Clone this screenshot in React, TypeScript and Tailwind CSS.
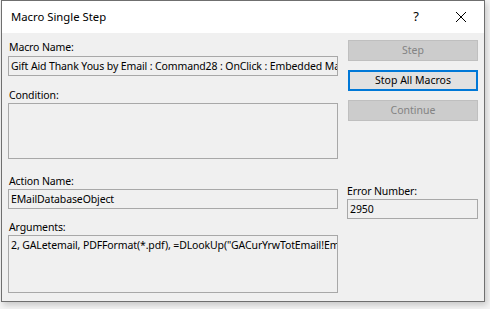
import React from "react";

const font = { fontFamily: '"Noto Sans", "Open Sans", Arial, sans-serif' };

function Field({ children, className = "" }: { children?: React.ReactNode; className?: string }) {
  return (
    <div
      className={`border border-[#a8a8a8] bg-[#f0f0f0] px-[2px] text-[10.5px] tracking-[-0.12px] leading-[18px] text-black whitespace-nowrap overflow-hidden ${className}`}
    >
      {children}
    </div>
  );
}

function Label({ children, className = "" }: { children: React.ReactNode; className?: string }) {
  return <div className={`text-[10.5px] tracking-[-0.12px] leading-[14px] text-black ${className}`}>{children}</div>;
}

export default function App() {
  return (
    <div className="w-[490px] h-[309px] bg-[#f4f4f4] overflow-hidden" style={font}>
      <div className="ml-[1px] w-[484px] h-[302px] border border-[#6f6f6f] bg-[#f0f0f0] flex flex-col shadow-[2px_3px_6px_rgba(0,0,0,0.18)]">
        {/* title bar */}
        <div className="h-[32px] bg-white flex items-center shrink-0">
          <span className="ml-[9px] text-[11.3px] text-black">Macro Single Step</span>
          <span className="ml-auto mr-[36px] text-[13px] text-black">?</span>
          <svg width="12" height="12" viewBox="0 0 12 12" className="mr-[17px]">
            <path d="M1 1 L11 11 M11 1 L1 11" stroke="#000" strokeWidth="1" />
          </svg>
        </div>

        <div className="flex pl-[6px] pt-[7px]">
          {/* left column */}
          <div className="w-[330px] flex flex-col">
            <Label className="ml-[1px]">Macro Name:</Label>
            <Field className="mt-[2px] h-[20px]">Gift Aid Thank Yous by Email : Command28 : OnClick : Embedded Macro</Field>
            <Label className="ml-[1px] mt-[12px]">Condition:</Label>
            <Field className="mt-[1px] h-[56px]" />
            <Label className="ml-[1px] mt-[15px]">Action Name:</Label>
            <Field className="mt-[1px] h-[20px]">EMailDatabaseObject</Field>
            <Label className="ml-[1px] mt-[11px]">Arguments:</Label>
            <Field className="mt-[1px] h-[58px]">
              2, GALetemail, PDFFormat(*.pdf), =DLookUp("GACurYrwTotEmail!EmailAddress")
            </Field>
          </div>

          {/* right column */}
          <div className="ml-[10px] w-[130px] flex flex-col">
            <button className="h-[21px] border border-[#bfbfbf] bg-[#cccccc] text-[10.5px] text-[#838383]">Step</button>
            <button className="mt-[9px] h-[21px] border-2 border-[#0078d7] bg-[#e1e1e1] text-[10.5px] text-black">
              Stop All Macros
            </button>
            <button className="mt-[9px] h-[21px] border border-[#bfbfbf] bg-[#cccccc] text-[10.5px] text-[#838383]">
              Continue
            </button>
            <Label className="mt-[63px] -ml-[1px]">Error Number:</Label>
            <Field className="mt-[1px] -ml-[1px] h-[20px]">2950</Field>
          </div>
        </div>
      </div>
    </div>
  );
}
